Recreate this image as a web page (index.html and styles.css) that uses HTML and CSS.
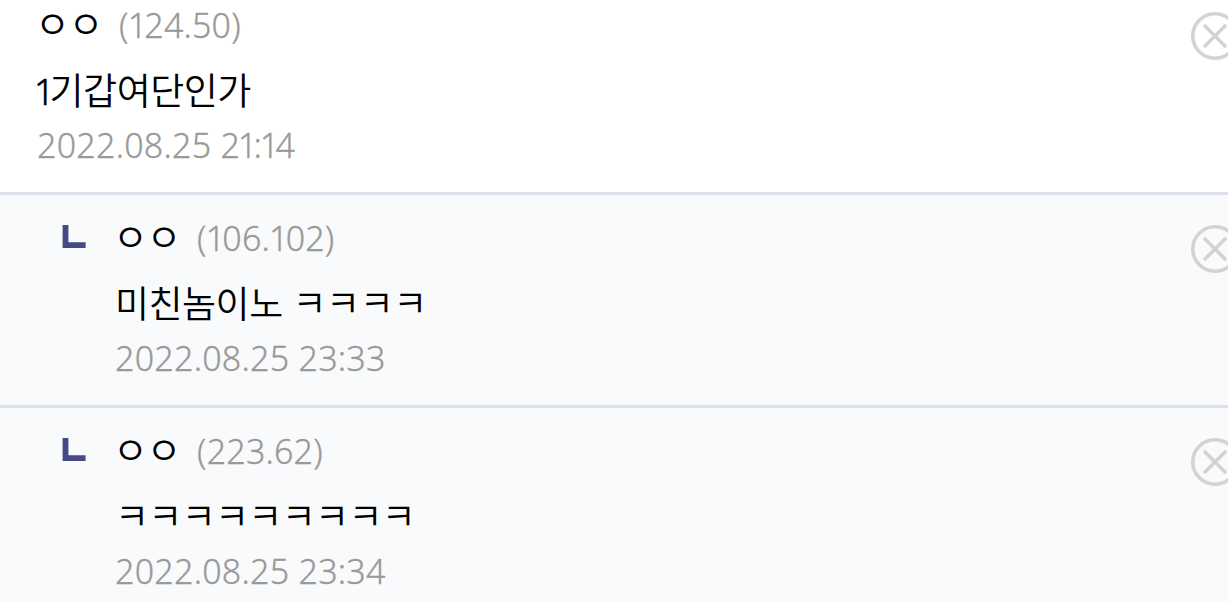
FILE: index.html
```html
<!DOCTYPE html>
<html lang="ko">
<head>
<meta charset="utf-8">
<title>댓글</title>
<link rel="stylesheet" href="styles.css">
</head>
<body>
<main class="comments">
  <article class="comment">
    <div class="body">
      <div class="author"><span class="name">ㅇㅇ</span><span class="ip">(<span class="one">1</span>24.50)</span></div>
      <p class="text"><span class="lead">1</span>기갑여단인가</p>
      <time class="date">2022.08.25 2<span class="one">1</span>:<span class="one">1</span>4</time>
    </div>
    <svg class="close" viewBox="0 0 48 48"><circle cx="24" cy="24" r="22.2"/><path d="M14 14L34 34M34 14L14 34"/></svg>
  </article>
  <article class="comment reply">
    <svg class="branch" viewBox="0 0 24 24"><path d="M3.5 0V20.2H23.6"/></svg>
    <div class="body">
      <div class="author"><span class="name">ㅇㅇ</span><span class="ip">(<span class="one">1</span>06.<span class="one">1</span>02)</span></div>
      <p class="text">미친놈이노 <span class="kk">ㅋㅋㅋㅋ</span></p>
      <time class="date">2022.08.25 23:33</time>
    </div>
    <svg class="close" viewBox="0 0 48 48"><circle cx="24" cy="24" r="22.2"/><path d="M14 14L34 34M34 14L14 34"/></svg>
  </article>
  <article class="comment reply">
    <svg class="branch" viewBox="0 0 24 24"><path d="M3.5 0V20.2H23.6"/></svg>
    <div class="body">
      <div class="author"><span class="name">ㅇㅇ</span><span class="ip">(223.62)</span></div>
      <p class="text laugh">ㅋㅋㅋㅋㅋㅋㅋㅋㅋ</p>
      <time class="date">2022.08.25 23:34</time>
    </div>
    <svg class="close" viewBox="0 0 48 48"><circle cx="24" cy="24" r="22.2"/><path d="M14 14L34 34M34 14L14 34"/></svg>
  </article>
</main>
</body>
</html>
```
FILE: styles.css
```css
* { box-sizing: border-box; }
body { margin: 0; background: #fff; overflow: hidden; font-family: "Noto Sans CJK KR", sans-serif; font-weight: 350; }
.comments { width: 1228px; height: 602px; overflow: hidden; }
.comment { display: flex; height: 195px; padding-left: 37px; border-bottom: 3px solid #dddfec; overflow: hidden; }
.reply { height: 213px; padding-left: 62px; background: #f9fafc; }
.body { width: 600px; }
.reply .body { margin-left: 29px; }
.author { display: flex; height: 50px; line-height: 50px; white-space: nowrap; }
.reply .author { height: 68px; line-height: 86px; }
.name { width: 84px; margin: -3px 0 0 -2px; font-size: 38px; color: #000; letter-spacing: -1.5px; }
.ip { font-family: "Noto Sans", sans-serif; font-size: 34px; letter-spacing: 0.2px; color: #999; -webkit-text-stroke: 0.3px #999; }
.text { margin: 11px 0 0; height: 56px; line-height: 56px; font-size: 37px; letter-spacing: -0.5px; color: #000; white-space: nowrap; }
.laugh { letter-spacing: -0.7px; }
.kk { position: relative; top: -1px; }
.laugh { line-height: 54px; }
.lead { margin: 0 -4px 0 -3px; font-family: "Noto Sans", sans-serif; font-size: 36px; line-height: 1; letter-spacing: -1px; -webkit-text-stroke: 0.6px #000; }
.date { display: block; height: 54px; line-height: 56px; font-family: "Noto Sans", sans-serif; font-size: 34px; letter-spacing: 0.25px; color: #999; -webkit-text-stroke: 0.3px #999; white-space: nowrap; }
.ip .one { margin-left: -1px; letter-spacing: -2.8px; }
.date .one { margin-left: -2.5px; letter-spacing: -3.5px; }
.close { flex: none; width: 48px; height: 48px; margin: 12px -11px 0 auto; fill: none; stroke: #d3d3d3; stroke-width: 3.6; stroke-linecap: round; }
.reply .close { margin-top: 30px; }
.branch { flex: none; width: 24px; height: 24px; margin-top: 30px; fill: none; stroke: #434a86; stroke-width: 5.8; }
```
